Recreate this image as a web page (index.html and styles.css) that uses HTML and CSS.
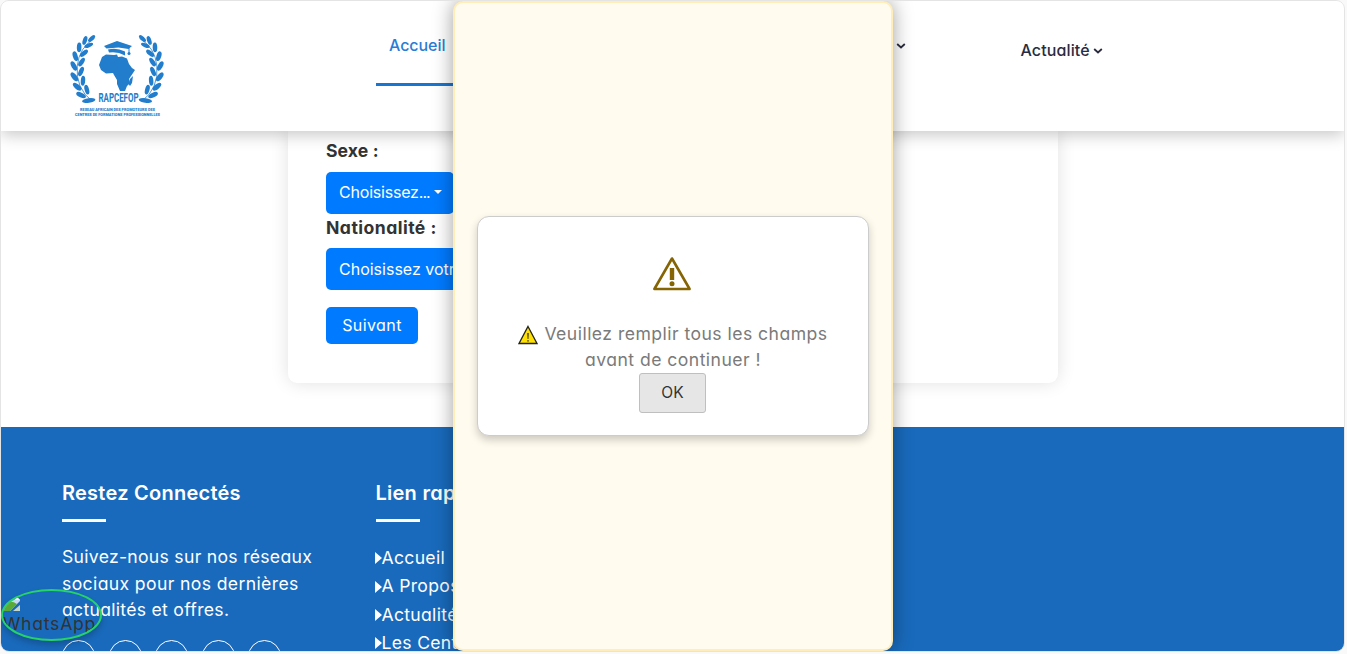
FILE: index.html
```html
<!DOCTYPE html>
<html lang="fr">
<head>
<meta charset="utf-8">
<title>RAPCEFOP</title>
<link rel="stylesheet" href="styles.css">
</head>
<body>
<div class="page">
  <header class="header">
    <a class="logo" href="#">
      <svg width="100" height="90" viewBox="0 0 100 90" fill="#227dcc">
        <defs>
          <g id="branch">
            <path d="M25 4Q9 13 7 32Q5 55 23 68" fill="none" stroke="#227dcc" stroke-width=".8"/>
            <ellipse cx="22" cy="4" rx="4.6" ry="2" transform="rotate(-42 22 4)"/>
            <ellipse cx="15" cy="6" rx="4.6" ry="2.2" transform="rotate(-70 15 6)"/>
            <ellipse cx="19" cy="11" rx="4.8" ry="2" transform="rotate(-22 19 11)"/>
            <ellipse cx="9" cy="13" rx="4.9" ry="2.4" transform="rotate(-88 9 13)"/>
            <ellipse cx="14" cy="19" rx="5" ry="2.3" transform="rotate(-38 14 19)"/>
            <ellipse cx="5" cy="22" rx="5.1" ry="2.5" transform="rotate(72 5 22)"/>
            <ellipse cx="11.5" cy="28" rx="5" ry="2.3" transform="rotate(-55 11.5 28)"/>
            <ellipse cx="3.5" cy="32" rx="5.2" ry="2.5" transform="rotate(60 3.5 32)"/>
            <ellipse cx="11" cy="37.5" rx="5.1" ry="2.3" transform="rotate(-65 11 37.5)"/>
            <ellipse cx="4" cy="43" rx="5.4" ry="2.6" transform="rotate(52 4 43)"/>
            <ellipse cx="13" cy="47" rx="5.1" ry="2.3" transform="rotate(-85 13 47)"/>
            <ellipse cx="7" cy="53" rx="5.4" ry="2.6" transform="rotate(40 7 53)"/>
            <ellipse cx="17" cy="56" rx="5" ry="2.3" transform="rotate(74 17 56)"/>
            <ellipse cx="11" cy="61.5" rx="5.4" ry="2.4" transform="rotate(24 11 61.5)"/>
            <ellipse cx="19" cy="67" rx="7" ry="2.3" transform="rotate(-8 19 67)"/>
          </g>
        </defs>
        <g transform="translate(2.5 1.5) scale(.96 .985)">
          <use href="#branch"/>
          <use href="#branch" transform="matrix(-1 0 0 1 97 0)"/>
        </g>
        <path d="M34 23L38 20.500L46 21L49 20.500L50 23L54 22.500L59 24.500L61 30L64 34L67 36L63 42L61 45L62 49L59 52L57 57L52 57L49 50L49 46L46 41L45 39L38 39.500L33 36L31 31Z" transform="translate(0 1)"/>
        <path d="M62 46l3-3-1 7-2 3-1.500-2z"/>
        <path d="M36 13L49 8l15 5-3.500 3-10-1.500-12 1z"/>
        <path d="M40 16.500q9-2 17 2v4q-8-4.500-16-3z"/>
        <path d="M61 14.500v6" stroke="#227dcc" fill="none"/><circle cx="61" cy="20.500" r="1.500"/>
        <text x="30.500" y="68.500" class="logo-name" textLength="40" lengthAdjust="spacingAndGlyphs">RAPCEFOP</text>
        <text x="12" y="77.500" class="logo-line" textLength="75" lengthAdjust="spacingAndGlyphs">RESEAU AFRICAIN DES PROMOTEURS DES</text>
        <text x="7" y="82.500" class="logo-line" textLength="85" lengthAdjust="spacingAndGlyphs">CENTRES DE FORMATIONS PROFESSIONNELLES</text>
      </svg>
    </a>
    <nav class="nav">
      <a class="nav-item nav-active" href="#">Accueil</a>
      <a class="nav-item nav-sub" href="#"><svg class="chevron" width="10" height="8" viewBox="0 0 10 8"><path d="M1.200 2L5 5.500L8.800 2"/></svg></a>
      <a class="nav-item nav-news" href="#"><span>Actualité</span><svg class="chevron" width="10" height="8" viewBox="0 0 10 8"><path d="M1.200 2L5 5.500L8.800 2"/></svg></a>
    </nav>
  </header>
  <main class="main">
    <form class="card">
      <label class="label sexe">Sexe :</label>
      <button class="btn select first" type="button"><span class="choose">Choisissez<span class="dots">...</span></span><i class="caret"></i></button>
      <label class="label nat">Nationalité :</label>
      <button class="btn select second" type="button"><span>Choisissez votre</span><i class="caret"></i></button>
      <button class="btn next" type="button">Suivant</button>
    </form>
  </main>
  <footer class="footer">
    <section class="col">
      <h3 class="title">Restez Connectés</h3>
      <p class="about">Suivez-nous sur nos réseaux<br><span class="wide">sociaux pour nos dernières</span><br>actualités et offres.</p>
      <div class="socials"><i></i><i></i><i></i><i></i><i></i></div>
    </section>
    <section class="col">
      <h3 class="title">Lien rapides</h3>
      <ul class="links">
        <li>Accueil</li><li>A Propos</li><li>Actualité</li><li>Les Centres</li>
      </ul>
    </section>
  </footer>
  <a class="whatsapp" href="#">
    <svg width="16" height="16" viewBox="0 0 16 16"><path d="M0 0h11l5 5v1L6 16H0z" fill="#c6d8f3"/><path d="M0 10Q6 4 13 9L6 16H0z" fill="#5aab36"/><path d="M11 0v5h5z" fill="#eef1f4"/><path d="M9 16l7-6v6z" fill="#c4d5ca"/></svg>
    <span>WhatsApp</span>
  </a>
  <div class="alert">
    <div class="dialog">
      <svg class="warn" width="40" height="36" viewBox="0 0 40 36"><path d="M20 2.500L37.600 33H2.400Z" fill="none" stroke="#856404" stroke-width="2.600" stroke-linejoin="round"/><path d="M17.800 12h4.400v12h-4.400z" fill="#856404"/><circle cx="20" cy="27.700" r="2.500" fill="#856404"/></svg>
      <p class="message"><svg class="mini" width="20" height="20" viewBox="0 0 20 20"><path d="M10 1.500L19 18.500H1Z" fill="#ffe000" stroke="#222" stroke-width="1.300"/><path d="M9.300 8h1.400l-.3 6h-.8zM9.300 15.300h1.400v1.200H9.300z" fill="#222"/></svg>Veuillez remplir tous les champs<br>avant de continuer !</p>
      <button class="ok" type="button">OK</button>
    </div>
  </div>
</div>
</body>
</html>
```
FILE: styles.css
```css
* { box-sizing: border-box; }
body { margin: 0; height: 654px; overflow: hidden; background: #f9f9f9; font-family: Inter, "Open Sans", sans-serif; font-feature-settings: "cv11"; color: #333; }
a { color: inherit; text-decoration: none; }
button { font: inherit; font-feature-settings: inherit; }
.page { position: relative; width: 1345px; height: 652px; overflow: hidden; background: #fff; border: 1px solid #e4e4e4; border-radius: 9px; display: flex; flex-direction: column; }
.header { position: relative; z-index: 2; flex: none; height: 130px; display: flex; background: #fff; box-shadow: 0 4px 15px rgba(0,0,0,.22); }
.logo { padding: 32px 0 0 67px; width: 375px; }
.logo svg { display: block; }
.logo-name { font: 700 12.5px Roboto, sans-serif; }
.logo-line { font: 900 4.3px Roboto, sans-serif; }
.nav { display: flex; align-items: flex-start; font-size: 16px; font-weight: 500; line-height: 24px; color: #2b2b40; }
.nav-item { display: flex; align-items: center; }
.nav-active { width: 180px; height: 85px; padding: 32px 13px 26px; border-bottom: 3px solid #1a75d1; color: #2a7dd5; letter-spacing: -.05px; }
.nav-sub { margin: 33px 0 0 340px; height: 24px; }
.nav-news { margin: 37px 0 0 114.5px; gap: 3px; letter-spacing: .12px; }
.chevron { fill: none; stroke: currentColor; stroke-width: 1.8; }
.nav-news .chevron { margin-top: 1px; }
.main { flex: none; height: 296px; padding: 0 287px; }
.card { width: 770px; height: 252px; padding: 7px 38px; display: flex; flex-direction: column; align-items: flex-start; background: #fff; border-radius: 0 0 9px 9px; box-shadow: 0 0 18px rgba(0,0,0,.12); }
.label { font-size: 17.6px; font-weight: 700; line-height: 26px; }
.sexe { letter-spacing: .1px; }
.nat { letter-spacing: .45px; margin-top: 1px; }
.btn { border: 0; border-radius: 5px; background: #007bff; color: #fff; font-size: 16px; line-height: 24px; padding: 0 13px 1px; white-space: nowrap; }
.select { display: flex; align-items: center; gap: 4px; height: 42px; flex: none; }
.first { margin-top: 8px; width: 128px; padding-bottom: 2px; }
.second { margin-top: 7px; width: 200px; }
.choose { letter-spacing: -.2px; }
.dots { letter-spacing: -1px; }
.caret { border: 4px solid transparent; border-top-color: #fff; border-bottom: 0; }
.next { margin-top: 17px; width: 92px; height: 37px; letter-spacing: .4px; }
.footer { flex: none; height: 225px; display: flex; padding: 51px 0 0 61px; background: #196abc; color: #fff; }
.col { width: 313.5px; flex: none; }
.title { margin: 0; padding-bottom: 11px; font-size: 20px; font-weight: 600; line-height: 30px; letter-spacing: .25px; white-space: nowrap; }
.title::after { content: ""; display: block; width: 44px; height: 3px; background: #fff; position: relative; top: 11px; }
.about { margin: 22px 0 0; font-size: 17.6px; line-height: 26.6px; letter-spacing: .29px; white-space: nowrap; }
.wide { letter-spacing: .37px; }
.socials { display: flex; gap: 13.5px; margin-top: 16px; }
.socials i { width: 33px; height: 33px; flex: none; border: 1px solid #fff; border-radius: 50%; }
.links { list-style: none; margin: 22px 0 0; padding: 0; font-size: 17.6px; line-height: 28.4px; letter-spacing: .3px; white-space: nowrap; }
.links li { display: flex; align-items: center; margin-left: -1px; }
.links li::before { content: ""; border: 6px solid transparent; border-left: 7px solid #fff; border-right: 0; }
.whatsapp { position: absolute; z-index: 3; left: 0; top: 588px; width: 101px; height: 52px; overflow: hidden; border: 2px solid #25d366; border-radius: 50%; box-shadow: 0 4px 6px rgba(0,0,0,.2); font-size: 17.6px; line-height: 26px; letter-spacing: .75px; color: #333; }
.whatsapp svg { display: block; margin: 4px 0 0 1px; }
.whatsapp span { display: block; }
.alert { position: absolute; z-index: 4; left: 452px; top: 0; width: 440px; height: 650px; display: flex; align-items: center; justify-content: center; background: #fffbef; border: 2px solid #ffeeba; border-radius: 10px; box-shadow: 0 0 20px rgba(0,0,0,.38); }
.dialog { width: 392px; height: 220px; display: flex; flex-direction: column; align-items: center; padding: 39px 1px 0 0; background: #fff; border: 1px solid #ccc; border-radius: 12px; box-shadow: 0 4px 8px rgba(0,0,0,.2); }
.warn { margin-left: -1px; }
.message { margin: 29px 0 0 1px; text-align: center; font-size: 17.6px; line-height: 26.4px; letter-spacing: .46px; color: #7a7a7a; white-space: nowrap; }
.mini { vertical-align: -5px; margin-right: 6px; }
.ok { width: 67px; height: 40px; flex: none; margin-top: -1px; padding-bottom: 1px; background: #e6e6e6; border: 1px solid #bfbfbf; border-radius: 3px; color: #333; font-size: 15.5px; }
```
